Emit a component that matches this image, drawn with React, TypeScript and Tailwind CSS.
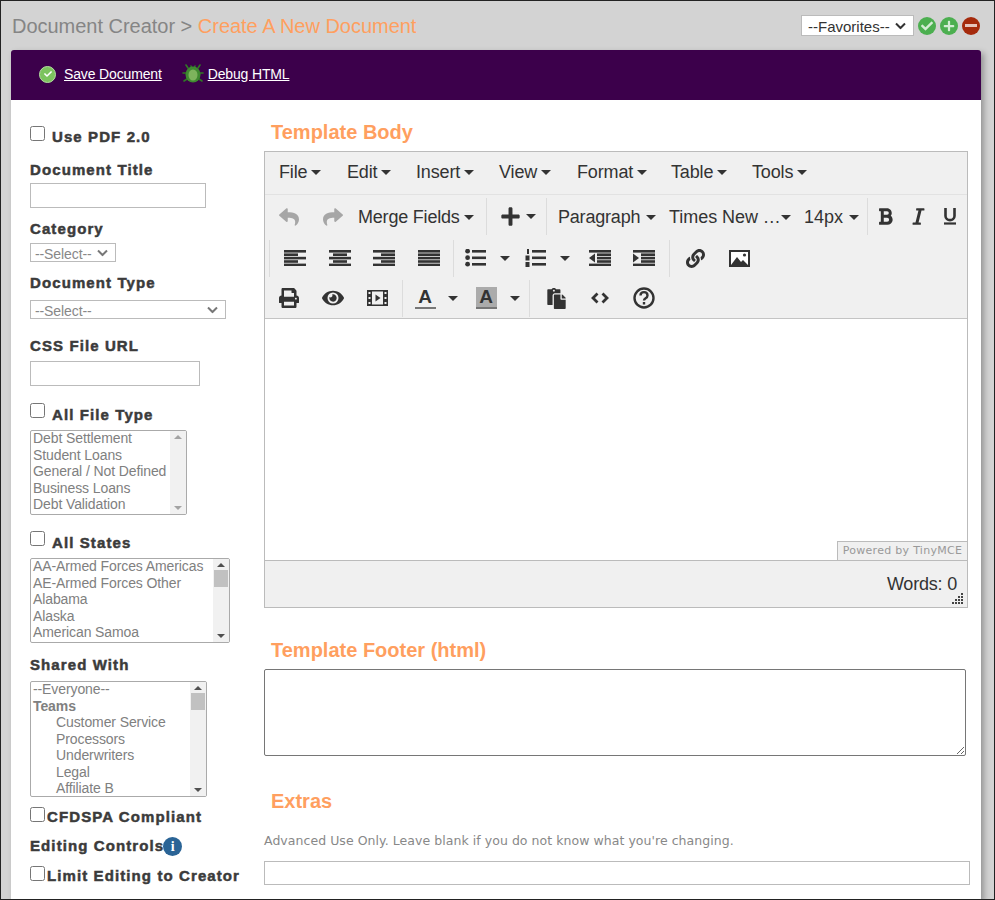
import type { ReactNode } from 'react'
import {
  FaReply, FaShare, FaPlus, FaBold, FaItalic, FaPrint, FaEye, FaLink, FaPaste, FaCheck,
} from 'react-icons/fa'

const FONT = "font-['Liberation_Sans',Arial,sans-serif]"

const fileTypes = ['Debt Settlement', 'Student Loans', 'General / Not Defined', 'Business Loans', 'Debt Validation']
const states = ['AA-Armed Forces Americas', 'AE-Armed Forces Other', 'Alabama', 'Alaska', 'American Samoa']

function Label({ children, className = '' }: { children: ReactNode; className?: string }) {
  return <div className={`text-[15px] leading-[18px] font-bold tracking-[1.1px] text-[#3b3b3b] [-webkit-text-stroke:0.5px_#3b3b3b] whitespace-nowrap ${className}`}>{children}</div>
}

function Check({ className = '' }: { className?: string }) {
  return <input type="checkbox" className={`w-[15px] h-[15px] shrink-0 m-0 ${className}`} />
}

function Caret({ className = '' }: { className?: string }) {
  return <span className={`inline-block w-0 h-0 border-x-[5px] border-x-transparent border-t-[5px] border-t-[#333] ${className}`} />
}

function Chevron({ className = '' }: { className?: string }) {
  return (
    <svg width="11" height="7" viewBox="0 0 11 7" fill="none" stroke="currentColor" strokeWidth="2" className={`absolute pointer-events-none ${className}`}>
      <path d="M1 1l4.5 4.5L10 1" />
    </svg>
  )
}

function SelectBox({ label, className, inner = 'h-[15px] text-[14px] tracking-[-0.1px] pl-[4px]', chevron = 'text-[#777]' }: { label: string; className: string; inner?: string; chevron?: string }) {
  return (
    <div className={`relative bg-white border border-[#bbb] ${className}`}>
      <select className={`block w-full appearance-none bg-transparent outline-none ${inner}`}>
        <option>{label}</option>
      </select>
      <Chevron className={`right-[7px] top-1/2 -translate-y-1/2 ${chevron}`} />
    </div>
  )
}

type Row = { text: string; bold?: boolean; indent?: boolean }

function ListBox({ rows, className, thumb, thumbTop = 'mt-0' }: { rows: Row[]; className: string; thumb?: string; thumbTop?: string }) {
  return (
    <div className={`flex overflow-hidden bg-white border border-[#aaa] rounded-[2px] text-[14px] tracking-[-0.1px] text-[#808080] ${className}`}>
      <div className="flex-1 min-w-0 pl-[2px] -mt-px">
        {rows.map((r) => (
          <div key={r.text} className={`h-[16.5px] leading-[16.5px] whitespace-nowrap ${r.bold ? 'font-bold' : ''} ${r.indent ? 'pl-[23px]' : ''}`}>
            {r.text}
          </div>
        ))}
      </div>
      <div className="w-[16px] shrink-0 flex flex-col items-center bg-[#f1f1f1] py-[4px]">
        <span className={`w-0 h-0 border-x-[4px] border-x-transparent border-b-[4px] ${thumb ? 'border-b-[#505050]' : 'border-b-[#a3a3a3]'}`} />
        {thumb && <span className={`w-[14px] bg-[#c1c1c1] ${thumbTop} ${thumb}`} />}
        <span className={`w-0 h-0 mt-auto border-x-[4px] border-x-transparent border-t-[4px] ${thumb ? 'border-t-[#505050]' : 'border-t-[#a3a3a3]'}`} />
      </div>
    </div>
  )
}

function Lines({ rows }: { rows: [number, number][] }) {
  return (
    <svg width="22" height="16" viewBox="0 0 22 16" fill="#333">
      {rows.map(([x, w], i) => (
        <rect key={i} x={x} y={i * 3.4} width={w} height="2.6" />
      ))}
    </svg>
  )
}

function ListIcon({ numbered }: { numbered?: boolean }) {
  return (
    <svg width="22" height="18" viewBox="0 0 22 18" fill="#333">
      {[1, 7.5, 14].map((y) => (
        <rect key={y} x="7" y={y} width="14" height="2.6" />
      ))}
      {numbered ? (
        <>
          <rect x="2" y="0" width="2" height="5" />
          <rect x="0.5" y="6.5" width="4" height="5" />
          <rect x="0.5" y="13" width="4" height="5" />
        </>
      ) : (
        <>
          <circle cx="2.6" cy="2.2" r="2.4" />
          <circle cx="2.6" cy="8.7" r="2.4" />
          <circle cx="2.6" cy="15.2" r="2.4" />
        </>
      )}
    </svg>
  )
}

function IndentIcon({ out }: { out?: boolean }) {
  return (
    <svg width="22" height="16" viewBox="0 0 22 16" fill="#333">
      <rect x="0" y="0" width="22" height="2.6" />
      <rect x="0" y="13.6" width="22" height="2.6" />
      {[3.4, 6.8, 10.2].map((y) => (
        <rect key={y} x="8" y={y} width="14" height="2.6" />
      ))}
      {out ? <path d="M6 3.5v9L0 8z" /> : <path d="M0 3.5v9L6 8z" />}
    </svg>
  )
}

function Tool({ children, className = '' }: { children: ReactNode; className?: string }) {
  return <div className={`flex items-center justify-center h-full shrink-0 ${className || 'w-[44px]'}`}>{children}</div>
}

function Sep({ className = '' }: { className?: string }) {
  return <div className={`w-px h-[37px] shrink-0 bg-[#dcdcdc] ${className}`} />
}

function RoundIcon({ bg, children }: { bg: string; children: ReactNode }) {
  return <span className={`flex items-center justify-center w-[18px] h-[18px] rounded-full ${bg}`}>{children}</span>
}

function Heading({ children, className = '' }: { children: ReactNode; className?: string }) {
  return <h2 className={`text-[20px] leading-[23px] font-bold text-[#ff9f5f] pl-[7px] ${className}`}>{children}</h2>
}

function MenuItem({ label, className }: { label: string; className: string }) {
  return (
    <div className={`flex items-center shrink-0 tracking-[-0.15px] ${className}`}>
      <span>{label}</span>
      <Caret className="ml-[4px]" />
    </div>
  )
}

export default function App() {
  return (
    <div className={`${FONT} w-[995px] h-[900px] overflow-hidden bg-[#d3d3d3] border border-[#222]`}>
      {/* page title */}
      <div className="flex items-center h-[49px] pl-[11px] pr-[14px]">
        <div className="text-[20px] tracking-[-0.02px] text-[#858585]">
          Document Creator &gt; <span className="text-[#ff9f5f]">Create A New Document</span>
        </div>
        <div className="flex items-center ml-auto gap-[4px]">
          <SelectBox label="--Favorites--" className="w-[113px] h-[21px] text-[#333]" inner="h-[19px] text-[15px] pl-[6px]" chevron="text-[#333]" />
          <RoundIcon bg="bg-[#4caf50]"><FaCheck className="text-[#d4ecd5] text-[12px]" /></RoundIcon>
          <RoundIcon bg="bg-[#4caf50]"><FaPlus className="text-[#d4ecd5] text-[12px]" /></RoundIcon>
          <RoundIcon bg="bg-[#a52a0c]"><span className="w-[12px] h-[3px] bg-[#e6c4bb]" /></RoundIcon>
        </div>
      </div>

      <div className="w-[970px] ml-[10px] shadow-[3px_3px_6px_rgba(0,0,0,0.3)]">
        {/* action bar */}
        <div className="flex items-center h-[50px] bg-[#3c004b] rounded-t-[3px] pl-[28px] pb-[2px] text-[14px] tracking-[-0.15px] text-white">
          <span className="flex items-center justify-center w-[17px] h-[17px] rounded-full bg-[#7cc35e] border border-[#b6e0a3] mr-[8px]">
            <FaCheck className="text-white text-[8px]" />
          </span>
          <span className="underline">Save Document</span>
          <svg width="22" height="22" viewBox="0 0 22 22" className="ml-[20px] mr-[4px]">
            <g stroke="#2f7a24" strokeWidth="1.6" strokeLinecap="round">
              <path d="M6 5 4 2M16 5l2-3M4 10H1M18 10h3M5 16l-3 2M17 16l3 2M9 3l1 2M13 3l-1 2" />
            </g>
            <ellipse cx="11" cy="11.5" rx="7.5" ry="8" fill="#3f8a30" />
            <ellipse cx="11" cy="12" rx="4.5" ry="5.5" fill="#7db45c" />
          </svg>
          <span className="underline">Debug HTML</span>
        </div>

        <div className="flex bg-white h-[800px]">
          {/* left column */}
          <div className="w-[253px] shrink-0 pl-[19px] pt-[25px]">
            <div className="flex items-start h-[20px]">
              <Check className="mt-[1px]" />
              <Label className="ml-[7px] mt-[3px]">Use PDF 2.0</Label>
            </div>
            <Label className="mt-[16px]">Document Title</Label>
            <input className="block w-[176px] h-[25px] mt-[4px] border border-[#bbb]" />
            <Label className="mt-[12px]">Category</Label>
            <SelectBox label="--Select--" className="w-[86px] h-[19px] mt-[5px] text-[#888]" />
            <Label className="mt-[12px]">Document Type</Label>
            <SelectBox label="--Select--" className="w-[196px] h-[19px] mt-[8px] text-[#888]" />
            <Label className="mt-[18px]">CSS File URL</Label>
            <input className="block w-[170px] h-[25px] mt-[6px] border border-[#bbb]" />

            <div className="flex items-start mt-[17px] h-[20px]">
              <Check />
              <Label className="ml-[7px] mt-[3px]">All File Type</Label>
            </div>
            <ListBox rows={fileTypes.map((text) => ({ text }))} className="w-[157px] h-[85px] mt-[7px]" />

            <div className="flex items-start mt-[16px] h-[20px]">
              <Check />
              <Label className="ml-[7px] mt-[3px]">All States</Label>
            </div>
            <ListBox rows={states.map((text) => ({ text }))} className="w-[200px] h-[85px] mt-[7px]" thumb="h-[17px]" thumbTop="mt-[3px]" />

            <Label className="mt-[13px]">Shared With</Label>
            <ListBox
              rows={[
                { text: '--Everyone--' },
                { text: 'Teams', bold: true },
                { text: 'Customer Service', indent: true },
                { text: 'Processors', indent: true },
                { text: 'Underwriters', indent: true },
                { text: 'Legal', indent: true },
                { text: 'Affiliate B', indent: true },
              ]}
              className="w-[177px] h-[116px] mt-[7px]"
              thumb="h-[17px]"
              thumbTop="mt-[3px]"
            />

            <div className="flex items-start mt-[10px] h-[20px]">
              <Check />
              <Label className="ml-[2px] mt-[1px]">CFDSPA Compliant</Label>
            </div>
            <div className="flex items-center mt-[8px] h-[22px]">
              <Label>Editing Controls</Label>
              <span className="flex items-center justify-center w-[19px] h-[19px] -ml-px rounded-full bg-[#2a6496] text-white text-[14px] font-bold font-['Liberation_Serif',serif]">i</span>
            </div>
            <div className="flex items-start mt-[9px] h-[20px]">
              <Check />
              <Label className="ml-[2px] mt-[1px]">Limit Editing to Creator</Label>
            </div>
          </div>

          {/* right column */}
          <div className="w-[706px] pt-[21px]">
            <Heading>Template Body</Heading>

            <div className="relative w-[704px] h-[457px] mt-[7px] flex flex-col border border-[#bbb] bg-[#f0f0f0] text-[#333] text-[18px] tracking-[-0.05px]">
              <div className="flex items-center h-[43px] shrink-0 pl-[14px] pb-[2px] border-b border-[#e2e2e2]">
                <MenuItem label="File" className="w-[68px]" />
                <MenuItem label="Edit" className="w-[69px]" />
                <MenuItem label="Insert" className="w-[83px]" />
                <MenuItem label="View" className="w-[78px]" />
                <MenuItem label="Format" className="w-[94px]" />
                <MenuItem label="Table" className="w-[81px]" />
                <MenuItem label="Tools" className="w-[80px]" />
              </div>

              {/* toolbar row 1 */}
              <div className="flex items-center h-[43px] shrink-0 pl-[2px]">
                <Tool><FaReply className="text-[20px] text-[#a6a6a6]" /></Tool>
                <Tool><FaShare className="text-[20px] text-[#a6a6a6]" /></Tool>
                <div className="flex items-center w-[128px] ml-[3px] pt-[2px] shrink-0 tracking-[-0.2px]">
                  <span>Merge Fields</span>
                  <Caret className="ml-[4px]" />
                </div>
                <Sep />
                <Tool className="w-[32px] ml-[7px]"><FaPlus className="text-[21px] text-[#333]" /></Tool>
                <Caret />
                <Sep className="ml-[10px]" />
                <div className="flex items-center w-[111px] ml-[11px] pt-[2px] shrink-0 tracking-[-0.2px]">
                  <span>Paragraph</span>
                  <Caret className="ml-[6px]" />
                </div>
                <div className="flex items-center w-[135px] pt-[2px] shrink-0">
                  <span className="w-[112px] whitespace-nowrap">Times New …</span>
                  <Caret />
                </div>
                <div className="flex items-center w-[63px] pt-[2px] shrink-0">
                  <span>14px</span>
                  <Caret className="ml-[6px]" />
                </div>
                <Sep />
                <Tool className="w-[34px]"><FaBold className="text-[19px] text-[#333]" /></Tool>
                <Tool className="w-[32px]"><FaItalic className="text-[19px] text-[#333]" /></Tool>
                <Tool className="w-[32px]">
                  <svg width="14" height="17" viewBox="0 0 14 17" fill="none" stroke="#333" strokeWidth="2.6">
                    <path d="M2.5 0v8c0 5.5 9 5.5 9 0V0" />
                    <path d="M1 15.5h12" strokeWidth="2.2" />
                  </svg>
                </Tool>
              </div>

              {/* toolbar row 2 */}
              <div className="flex items-center h-[40px] shrink-0 pl-[4px]">
                <Sep />
                <Tool className="w-[45px] ml-[2px]"><Lines rows={[[0, 22], [0, 14], [0, 22], [0, 14], [0, 22]]} /></Tool>
                <Tool className="w-[45px]"><Lines rows={[[0, 22], [4, 14], [0, 22], [4, 14], [0, 22]]} /></Tool>
                <Tool><Lines rows={[[0, 22], [8, 14], [0, 22], [8, 14], [0, 22]]} /></Tool>
                <Tool className="w-[45px]"><Lines rows={[[0, 22], [0, 22], [0, 22], [0, 22], [0, 22]]} /></Tool>
                <Sep className="ml-[2px]" />
                <Tool><ListIcon /></Tool>
                <Tool className="w-[14px]"><Caret /></Tool>
                <Tool className="w-[44px] ml-[2px]"><ListIcon numbered /></Tool>
                <Tool className="w-[14px]"><Caret /></Tool>
                <Tool className="w-[44px] ml-[6px]"><IndentIcon out /></Tool>
                <Tool><IndentIcon /></Tool>
                <Sep className="ml-[3px]" />
                <Tool className="w-[44px] ml-[3px]"><FaLink className="text-[19px] text-[#333]" /></Tool>
                <Tool>
                  <svg width="21" height="17" viewBox="0 0 21 17">
                    <rect x="1" y="1" width="19" height="15" fill="#fff" stroke="#333" strokeWidth="2" />
                    <path d="M2 15l6-8 4 5 2-2 5 5z" fill="#333" />
                    <circle cx="15.5" cy="5" r="1.6" fill="#333" />
                  </svg>
                </Tool>
              </div>

              {/* toolbar row 3 */}
              <div className="flex items-center h-[41px] shrink-0 pl-[2px] border-b border-[#c4c4c4]">
                <Tool><FaPrint className="text-[20px] text-[#333]" /></Tool>
                <Tool><FaEye className="text-[22px] text-[#333]" /></Tool>
                <Tool>
                  <svg width="21" height="16" viewBox="0 0 21 16">
                    <rect width="21" height="16" fill="#333" />
                    <rect x="5" y="1.5" width="11" height="13" fill="#f0f0f0" />
                    <path d="M8.5 4.5v7l5-3.500z" fill="#333" />
                    <path d="M1.500 2h2v2h-2zM1.500 7h2v2h-2zM1.500 12h2v2h-2zM17.500 2h2v2h-2zM17.500 7h2v2h-2zM17.500 12h2v2h-2z" fill="#f0f0f0" />
                  </svg>
                </Tool>
                <Sep className="ml-[3px]" />
                <Tool>
                  <span className="flex flex-col items-center w-[21px] text-[19px] leading-[20px] font-bold">
                    A
                    <span className="w-full h-[2px] bg-[#777]" />
                  </span>
                </Tool>
                <Tool className="w-[12px]"><Caret /></Tool>
                <Tool className="w-[44px] ml-[5px]">
                  <span className="flex flex-col items-center w-[21px] bg-[#ababab] text-[19px] leading-[20px] font-bold">
                    A
                    <span className="w-full h-[2px] bg-[#777]" />
                  </span>
                </Tool>
                <Tool className="w-[12px] ml-px"><Caret /></Tool>
                <Sep className="ml-[8px]" />
                <Tool className="w-[44px] ml-[4px]"><FaPaste className="text-[21px] text-[#333]" /></Tool>
                <Tool>
                  <svg width="18" height="12" viewBox="0 0 18 12" fill="none" stroke="#333" strokeWidth="2.8">
                    <path d="M6.5 1.500 2 6l4.500 4.500M11.500 1.500 16 6l-4.500 4.500" />
                  </svg>
                </Tool>
                <Tool>
                  <svg width="22" height="22" viewBox="0 0 22 22" fill="none" stroke="#333" strokeWidth="2.4">
                    <circle cx="11" cy="11" r="9.500" />
                    <path d="M7.500 8.500c0-4.500 7-4.500 7 0 0 3-3.500 2.500-3.500 5" />
                    <path d="M11 15v2.500" />
                  </svg>
                </Tool>
              </div>

              {/* edit area */}
              <div className="relative h-[241px] shrink-0 bg-white">
                <div className="absolute right-0 bottom-0 w-[130px] h-[19px] bg-[#f0f0f0] border-t border-l border-[#bbb] text-[11px] leading-[18px] text-center tracking-[0.3px] text-[#999] font-['DejaVu_Sans',sans-serif]">
                  Powered by TinyMCE
                </div>
              </div>

              {/* status bar */}
              <div className="relative flex-1 flex justify-end pt-[13px] pr-[10px] border-t border-[#bbb] leading-[20px] tracking-[-0.2px]">
                Words: 0
                <svg width="13" height="13" viewBox="0 0 13 13" fill="#444" className="absolute right-[3px] bottom-[2px]">
                  <path d="M10 1h2v2h-2zM7 4h2v2H7zM10 4h2v2h-2zM4 7h2v2H4zM7 7h2v2H7zM10 7h2v2h-2zM1 10h2v2H1zM4 10h2v2H4zM7 10h2v2H7zM10 10h2v2h-2z" />
                </svg>
              </div>
            </div>

            <Heading className="mt-[31px]">Template Footer (html)</Heading>
            <textarea className="block w-[702px] h-[87px] mt-[7px] bg-white border border-[#767676] rounded-[2px]" />

            <Heading className="mt-[34px]">Extras</Heading>
            <p className="mt-[20px] text-[12.5px] leading-[16px] tracking-[0.05px] text-[#888] font-['DejaVu_Sans',sans-serif] whitespace-nowrap">
              Advanced Use Only. Leave blank if you do not know what you're changing.
            </p>
            <input className="block w-[706px] h-[24px] mt-[12px] border border-[#bbb]" />
          </div>
        </div>
      </div>
    </div>
  )
}
